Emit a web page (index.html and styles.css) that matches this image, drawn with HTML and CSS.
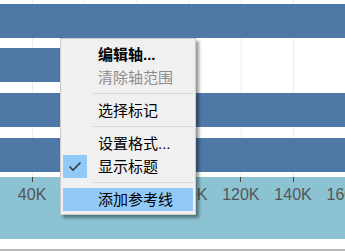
FILE: index.html
```html
<!DOCTYPE html>
<html lang="zh-CN">
<head>
  <meta charset="UTF-8">
  <title>轴菜单</title>
  <link rel="stylesheet" href="styles.css">
</head>
<body>
  <div class="view">
    <div class="pane">
      <div class="bar"></div>
      <div class="bar short"></div>
      <div class="bar"></div>
      <div class="bar"></div>
    </div>

    <!-- 横轴 -->
    <div class="axis">
      <div class="tick">40K</div>
      <div class="tick">60K</div>
      <div class="tick">80K</div>
      <div class="tick">100K</div>
      <div class="tick">120K</div>
      <div class="tick">140K</div>
      <div class="tick">160K</div>
    </div>
    <div class="footer"></div>
  </div>

  <!-- 右键菜单 -->
  <ul class="menu">
    <li class="item bold"><span class="icon"></span>编辑轴...</li>
    <li class="item disabled"><span class="icon"></span>清除轴范围</li>
    <li class="sep"></li>
    <li class="item"><span class="icon"></span>选择标记</li>
    <li class="sep"></li>
    <li class="item"><span class="icon"></span>设置格式...</li>
    <li class="item">
      <span class="icon checked">
        <svg width="24" height="23" viewBox="0 0 24 23">
          <polyline points="6.5,11.5 10,15 17.5,7.5" fill="none" stroke="#3c3c3c" stroke-width="1.6"/>
        </svg>
      </span>显示标题
    </li>
    <li class="sep"></li>
    <li class="item hover"><span class="icon"></span>添加参考线</li>
  </ul>
</body>
</html>
```

FILE: styles.css
```css
body {
  margin: 0;
  width: 345px;
  height: 251px;
  overflow: hidden;
  position: relative;
  background-color: #fff;
  font-family: 'Liberation Sans', 'Noto Sans CJK SC', sans-serif;
}

.pane {
  height: 177px;
  padding-top: 4px;
  box-sizing: border-box;
  background-image: linear-gradient(to right, #ececec 1px, transparent 1px);
  background-size: 52.2px 100%;
  background-position: 32px 0;
}

.bar {
  height: 34px;
  background-color: #4e79a7;
}

.bar + .bar {
  margin-top: 11px;
}

.bar.short {
  margin-top: 10px;
  width: 140px;
}

.axis {
  height: 62px;
  display: flex;
  padding-left: 6px;
  background-color: #8cc3d2;
}

.tick {
  flex: 0 0 52.2px;
  text-align: center;
  font-size: 16px;
  line-height: 18px;
  color: #555;
  white-space: nowrap;
}

.tick::before {
  content: '';
  display: block;
  width: 1px;
  height: 5px;
  margin: 0 auto 4px;
  background-color: #444;
}

.footer {
  height: 10px;
  border-bottom: 2px solid #bababa;
}

.menu {
  position: absolute;
  left: 60px;
  top: 38px;
  width: 136px;
  box-sizing: border-box;
  margin: 0;
  padding: 4px 2px 3px;
  list-style: none;
  background-color: #f0f0f0;
  border: 1px solid #cbcbcb;
  box-shadow: 3px 3px 3px rgba(0, 0, 0, 0.4);
}

.item {
  display: flex;
  align-items: center;
  height: 23px;
  line-height: 23px;
  font-size: 15px;
  color: #000;
  white-space: nowrap;
}

.item.bold {
  font-weight: bold;
}

.item.disabled {
  color: #8d8d8d;
}

.item.hover {
  background-color: #91c9f7;
}

.icon {
  flex: 0 0 24px;
  height: 23px;
  margin-right: 11px;
}

.icon.checked {
  background-color: #91c9f7;
}

.icon svg {
  display: block;
}

.sep {
  height: 1px;
  margin: 4px 0 5px 30px;
  background-color: #d7d7d7;
}
```
